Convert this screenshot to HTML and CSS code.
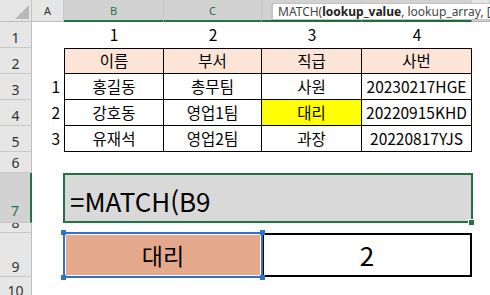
FILE: index.html
```html
<!DOCTYPE html>
<html lang="ko">
<head>
    <meta charset="UTF-8">
    <title>MATCH</title>
    <link rel="stylesheet" href="styles.css">
</head>
<body>

    <div class="sheet">
        <!-- cabeçalho das colunas -->
        <div class="corner"><span class="tri"></span></div>
        <div class="col-head">A</div>
        <div class="col-head sel">B</div>
        <div class="col-head sel">C</div>
        <div class="col-head sel">D</div>
        <div class="col-head sel">E</div>
        <div class="col-head"></div>

        <!-- linha 1 -->
        <div class="row-head">1</div>
        <div class="cell"></div>
        <div class="cell">1</div>
        <div class="cell">2</div>
        <div class="cell">3</div>
        <div class="cell">4</div>
        <div class="cell"></div>

        <!-- linha 2 -->
        <div class="row-head">2</div>
        <div class="cell"></div>
        <div class="cell tb top left th">이름</div>
        <div class="cell tb top th">부서</div>
        <div class="cell tb top th">직급</div>
        <div class="cell tb top th">사번</div>
        <div class="cell"></div>

        <!-- linha 3 -->
        <div class="row-head">3</div>
        <div class="cell idx">1</div>
        <div class="cell tb left">홍길동</div>
        <div class="cell tb">총무팀</div>
        <div class="cell tb">사원</div>
        <div class="cell tb">20230217HGE</div>
        <div class="cell"></div>

        <!-- linha 4 -->
        <div class="row-head">4</div>
        <div class="cell idx">2</div>
        <div class="cell tb left">강호동</div>
        <div class="cell tb">영업1팀</div>
        <div class="cell tb hl">대리</div>
        <div class="cell tb">20220915KHD</div>
        <div class="cell"></div>

        <!-- linha 5 -->
        <div class="row-head">5</div>
        <div class="cell idx">3</div>
        <div class="cell tb left">유재석</div>
        <div class="cell tb">영업2팀</div>
        <div class="cell tb">과장</div>
        <div class="cell tb">20220817YJS</div>
        <div class="cell"></div>

        <!-- linha 6 -->
        <div class="row-head">6</div>
        <div class="cell"></div>
        <div class="cell"></div>
        <div class="cell"></div>
        <div class="cell"></div>
        <div class="cell"></div>
        <div class="cell"></div>

        <!-- linha 7 -->
        <div class="row-head sel">7</div>
        <div class="cell"></div>
        <div class="formula">=MATCH(B9<span class="fill-handle"></span></div>
        <div class="cell"></div>

        <!-- linha 8 -->
        <div class="row-head">8</div>
        <div class="cell"></div>
        <div class="cell"></div>
        <div class="cell"></div>
        <div class="cell"></div>
        <div class="cell"></div>
        <div class="cell"></div>

        <!-- linha 9 -->
        <div class="row-head">9</div>
        <div class="cell"></div>
        <div class="lookup">대리
            <span class="hd tl"></span><span class="hd tr"></span>
            <span class="hd bl"></span><span class="hd br"></span>
        </div>
        <div class="result">2</div>
        <div class="cell"></div>

        <!-- linha 10 -->
        <div class="row-head">10</div>
        <div class="cell"></div>
        <div class="cell"></div>
        <div class="cell"></div>
        <div class="cell"></div>
        <div class="cell"></div>
        <div class="cell"></div>
    </div>

    <div class="tip">MATCH(<b>lookup_value</b>, lookup_array, [match_type])</div>

</body>
</html>
```

FILE: styles.css
```css
* { box-sizing: border-box; }
body { margin: 0; font-family: "Noto Sans CJK KR", "Noto Sans", sans-serif; background: #fff; overflow: hidden; position: relative; height: 295px; }
.sheet { display: grid; grid-template-columns: 32px 32px 100px 98px 100px 110px 1fr; grid-template-rows: 22px 26px 26px 26px 26px 26px 21px 50px 10px 44px 24px; height: 295px; overflow: hidden; }

/* cabeçalhos */
.corner { background: #e6e6e6; border-right: 1px solid #c6c6c6; border-bottom: 1px solid #bdbdbd; display: flex; justify-content: flex-end; align-items: flex-end; padding: 0 2px 2px 0; }
.tri { width: 14px; height: 14px; background: #b9b9b9; clip-path: polygon(100% 0, 100% 100%, 0 100%); }
.col-head { background: #e6e6e6; border-right: 1px solid #c8c8c8; border-bottom: 1px solid #bdbdbd; font: 11px "Noto Sans", sans-serif; color: #333; display: flex; align-items: center; justify-content: center; }
.col-head.sel { background: #d2d2d2; color: #217346; border-bottom: 2px solid #217346; }
.row-head { background: #e6e6e6; border-right: 1px solid #bdbdbd; border-bottom: 1px solid #c8c8c8; font: 14px/1 "Noto Sans", sans-serif; color: #333; display: flex; justify-content: center; align-items: flex-end; padding-bottom: 2px; overflow: hidden; }
.row-head.sel { background: #d2d2d2; color: #217346; border-right: 2px solid #217346; padding-bottom: 4px; }

/* células */
.cell { font-size: 15.5px; line-height: 1; color: #000; display: flex; align-items: center; justify-content: center; white-space: nowrap; }
.cell.idx { justify-content: flex-end; padding-right: 4px; }
.tb { border-right: 1px solid #000; border-bottom: 1px solid #000; }
.tb.top { border-top: 1px solid #000; }
.tb.left { border-left: 1px solid #000; }
.th { background: #fce4d6; }
.hl { background: #ffff00; }

.formula { grid-column: span 4; margin: 0 -1px; border: 2px solid #217346; background: #d9d9d9; font-size: 26px; line-height: 1; display: flex; align-items: flex-end; padding: 0 0 7px 5px; position: relative; z-index: 1; }
.fill-handle { position: absolute; right: -3px; bottom: -4px; width: 6px; height: 6px; background: #217346; border-left: 1px solid #fff; border-top: 1px solid #fff; }

.lookup { grid-column: span 2; margin: -1px; border: 2px solid #3070c8; box-shadow: inset 0 0 0 1px #fff; background: #e4a98b; font-size: 23px; line-height: 1; display: flex; align-items: center; justify-content: center; position: relative; z-index: 2; }
.hd { position: absolute; width: 5px; height: 5px; background: #3070c8; }
.hd.tl { left: -4px; top: -4px; }
.hd.tr { right: -4px; top: -4px; }
.hd.bl { left: -4px; bottom: -4px; }
.hd.br { right: -4px; bottom: -4px; }
.result { grid-column: span 2; border: 2px solid #000; font-size: 26px; line-height: 1; display: flex; align-items: center; justify-content: center; }

/* dica da fórmula */
.tip { position: absolute; top: 3px; left: 272px; right: 0; height: 17px; padding: 0 0 0 5px; overflow: hidden; background: #fff; border: 1px solid #c4c4c4; border-right: none; box-shadow: 0 1px 2px rgba(0,0,0,0.15); font: 12px/15px "Noto Sans", sans-serif; color: #444; white-space: nowrap; }
.tip b { color: #222; }
```
